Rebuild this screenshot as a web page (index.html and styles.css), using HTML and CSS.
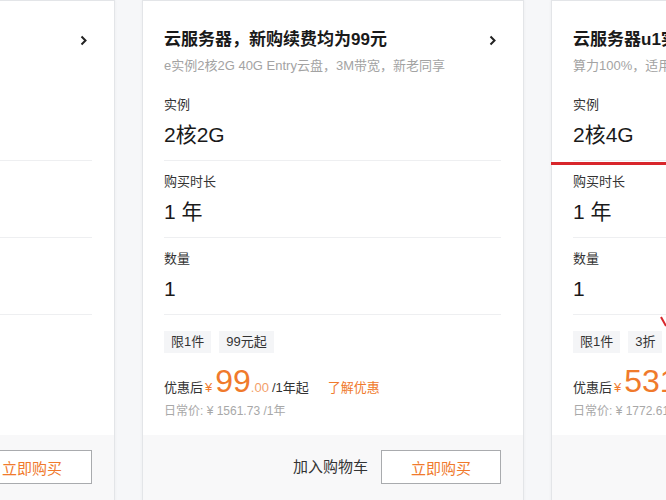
FILE: index.html
```html
<!DOCTYPE html>
<html lang="zh-CN">
<head>
<meta charset="utf-8">
<title>云服务器</title>
<link rel="stylesheet" href="styles.css">
</head>
<body>
<div class="page">
  <div class="card">
    <div class="head">
      <div class="title-row"><span class="title">轻量应用服务器</span><svg class="chev" width="7" height="11" viewBox="0 0 7 11"><polyline points="1.5,1.5 5.5,5.5 1.5,9.5" fill="none" stroke="#222" stroke-width="2"/></svg></div>
      <div class="sub">2核2G 40G云盘</div>
    </div>
    <div class="rows">
      <div class="row"><div class="lbl">实例</div><div class="val">2核2G</div></div>
      <div class="row"><div class="lbl">购买时长</div><div class="val">1 年</div></div>
      <div class="row"><div class="lbl">数量</div><div class="val">1</div></div>
    </div>
    <div class="info">
      <div class="tags"><span class="tag">限1件</span><span class="tag">新人</span></div>
      <div class="price"><span>优惠后</span><span class="yen">¥</span><span class="big">79</span><span class="dec">.00</span><span class="per">/1年</span></div>
      <div class="daily">日常价: ¥ 1132 /1年</div>
    </div>
    <div class="foot"><span class="cart">加入购物车</span><button class="buy">立即购买</button></div>
  </div>

  <div class="card">
    <div class="head">
      <div class="title-row"><span class="title">云服务器，新购续费均为99元</span><svg class="chev" width="7" height="11" viewBox="0 0 7 11"><polyline points="1.5,1.5 5.5,5.5 1.5,9.5" fill="none" stroke="#222" stroke-width="2"/></svg></div>
      <div class="sub">e实例2核2G 40G Entry云盘，3M带宽，新老同享</div>
    </div>
    <div class="rows">
      <div class="row"><div class="lbl">实例</div><div class="val">2核2G</div></div>
      <div class="row"><div class="lbl">购买时长</div><div class="val">1 年</div></div>
      <div class="row"><div class="lbl">数量</div><div class="val">1</div></div>
    </div>
    <div class="info">
      <div class="tags"><span class="tag">限1件</span><span class="tag">99元起</span></div>
      <div class="price"><span>优惠后</span><span class="yen">¥</span><span class="big">99</span><span class="dec">.00</span><span class="per">/1年起</span><span class="more">了解优惠</span></div>
      <div class="daily">日常价: ¥ 1561.73 /1年</div>
    </div>
    <div class="foot"><span class="cart">加入购物车</span><button class="buy">立即购买</button></div>
  </div>

  <div class="card">
    <div class="head">
      <div class="title-row"><span class="title">云服务器u1实例，企业用户专享</span><svg class="chev" width="7" height="11" viewBox="0 0 7 11"><polyline points="1.5,1.5 5.5,5.5 1.5,9.5" fill="none" stroke="#222" stroke-width="2"/></svg></div>
      <div class="sub">算力100%，适用于中小企业网站</div>
    </div>
    <div class="rows">
      <div class="row"><div class="lbl">实例</div><div class="val">2核4G</div></div>
      <div class="row"><div class="lbl">购买时长</div><div class="val">1 年</div></div>
      <div class="row"><div class="lbl">数量</div><div class="val">1</div></div>
    </div>
    <div class="info">
      <div class="tags"><span class="tag">限1件</span><span class="tag">3折</span></div>
      <div class="price"><span>优惠后</span><span class="yen">¥</span><span class="big">531</span><span class="dec">.00</span><span class="per">/1年起</span><span class="more">了解优惠</span></div>
      <div class="daily">日常价: ¥ 1772.61 /1年</div>
    </div>
    <div class="foot"><span class="cart">加入购物车</span><button class="buy">立即购买</button></div>
    <div class="mark-line"></div>
    <svg class="mark-arrow" width="14" height="16" viewBox="0 0 14 16"><line x1="3" y1="4" x2="8" y2="13" stroke="#d8262b" stroke-width="2"/></svg>
  </div>
</div>
</body>
</html>
```

FILE: styles.css
```css
html, body {
  margin: 0;
  padding: 0;
  overflow: hidden;
  background: #f6f7f9;
}

body {
  font-family: "Liberation Sans", "Noto Sans CJK SC", sans-serif;
  color: #333;
}

.page {
  display: flex;
  gap: 27px;
  margin-left: -267px;
  width: 1300px;
}

.card {
  position: relative;
  flex: none;
  width: 382px;
  min-height: 540px;
  box-sizing: border-box;
  background: #fff;
  border: 1px solid #e3e5e8;
  box-shadow: 0 0 3px rgba(0, 0, 0, 0.05);
  display: flex;
  flex-direction: column;
}

.head {
  padding: 27px 22px 0 21px;
  margin-bottom: 9px;
}

.title-row {
  display: flex;
  justify-content: space-between;
  align-items: center;
  height: 24px;
}

.title {
  font-size: 17px;
  font-weight: bold;
  line-height: 24px;
  color: #1a1a1a;
  white-space: nowrap;
}

.chev {
  flex: none;
  margin-right: 5px;
}

.sub {
  margin-top: 5px;
  font-size: 13px;
  line-height: 18px;
  color: #a3a3a3;
  white-space: nowrap;
}

.rows {
  padding: 0 22px 0 21px;
}

.row {
  padding: 11px 0 10px;
  border-bottom: 1px solid #eeeff1;
}

.lbl {
  font-size: 13px;
  line-height: 20px;
  color: #333;
}

.val {
  margin-top: 5px;
  font-size: 21px;
  line-height: 30px;
  color: #1a1a1a;
}

.info {
  padding: 16px 22px 0 21px;
}

.tags {
  display: flex;
  gap: 8px;
}

.tag {
  height: 22px;
  line-height: 22px;
  padding: 0 7px;
  font-size: 13px;
  background: #f4f5f7;
  color: #333;
}

.price {
  margin-top: 12px;
  height: 32px;
  display: flex;
  align-items: baseline;
  font-size: 13px;
  line-height: 32px;
  color: #333;
  white-space: nowrap;
}

.yen {
  margin-left: 2px;
  color: #f07a2c;
}

.big {
  margin-left: 3px;
  font-size: 32px;
  color: #f07a2c;
}

.dec {
  color: #f3a06a;
}

.per {
  margin-left: 3px;
}

.more {
  margin-left: 19px;
  color: #f07a2c;
}

.daily {
  margin-top: 5px;
  font-size: 12px;
  line-height: 18px;
  color: #a8a8a8;
  white-space: nowrap;
}

.foot {
  margin-top: 15px;
  flex: 1;
  background: #f8f8f9;
  padding: 15px 22px 20px;
  display: flex;
  justify-content: flex-end;
  align-items: flex-start;
  gap: 13px;
}

.cart {
  font-size: 15px;
  line-height: 34px;
  color: #333;
}

.buy {
  width: 120px;
  height: 34px;
  box-sizing: border-box;
  border: 1px solid #a9abae;
  background: #fff;
  color: #f07a2c;
  font-family: "Liberation Sans", "Noto Sans CJK SC", sans-serif;
  font-size: 15px;
  padding: 0;
}

.mark-line {
  position: absolute;
  top: 161px;
  left: -1px;
  width: 200px;
  height: 3px;
  background: #d8262b;
}

.mark-arrow {
  position: absolute;
  left: 106px;
  top: 312px;
}
```
